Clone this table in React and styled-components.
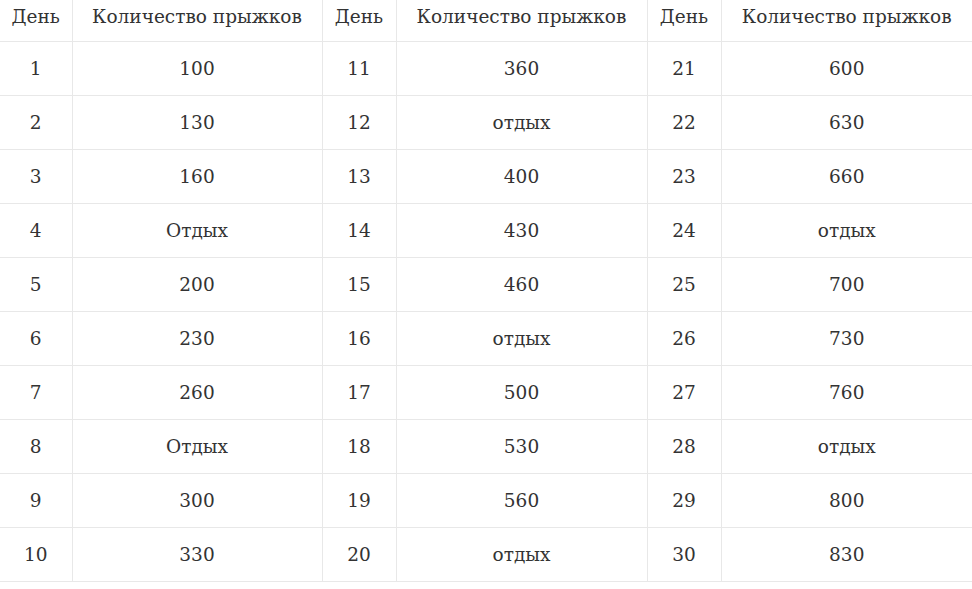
import React from 'react';
import styled, { createGlobalStyle } from 'styled-components';

const GlobalStyle = createGlobalStyle`
    html, body {
        margin: 0;
        padding: 0;
        background: #fff;
    }
`;

const Table = styled.table`
    border-collapse: collapse;
    table-layout: fixed;
    width: 972px;
    font-family: "DejaVu Serif", "Liberation Serif", serif;
    font-size: 18.5px;
    color: #333;
`;

const Col = styled.col`
    width: ${p => p.$w}px;
`;

const Cell = styled.td`
    box-sizing: border-box;
    height: 54px;
    padding: 0;
    text-align: center;
    vertical-align: middle;
    border-bottom: 1px solid #e8e8e8;
    border-left: ${p => (p.$first ? 'none' : '1px solid #e8e8e8')};
    white-space: nowrap;
`;

const HeadCell = styled(Cell).attrs({ as: 'th' })`
    height: 41px;
    padding-bottom: 8px;
    font-weight: normal;
`;

const widths = [72, 250, 74, 251, 74, 251];

const rows = [
    [1, '100', 11, '360', 21, '600'],
    [2, '130', 12, 'отдых', 22, '630'],
    [3, '160', 13, '400', 23, '660'],
    [4, 'Отдых', 14, '430', 24, 'отдых'],
    [5, '200', 15, '460', 25, '700'],
    [6, '230', 16, 'отдых', 26, '730'],
    [7, '260', 17, '500', 27, '760'],
    [8, 'Отдых', 18, '530', 28, 'отдых'],
    [9, '300', 19, '560', 29, '800'],
    [10, '330', 20, 'отдых', 30, '830'],
];

const header = ['День', 'Количество прыжков', 'День', 'Количество прыжков', 'День', 'Количество прыжков'];

const App = () => {
    return (
        <>
            <GlobalStyle />
            <Table>
                <colgroup>
                    {widths.map((w, i) => <Col key={i} $w={w} />)}
                </colgroup>
                <thead>
                    <tr>
                        {header.map((h, i) => <HeadCell key={i} $first={i === 0}>{h}</HeadCell>)}
                    </tr>
                </thead>
                <tbody>
                    {rows.map((r, ri) => (
                        <tr key={ri}>
                            {r.map((v, i) => <Cell key={i} $first={i === 0}>{v}</Cell>)}
                        </tr>
                    ))}
                </tbody>
            </Table>
        </>
    );
}

export default App;
